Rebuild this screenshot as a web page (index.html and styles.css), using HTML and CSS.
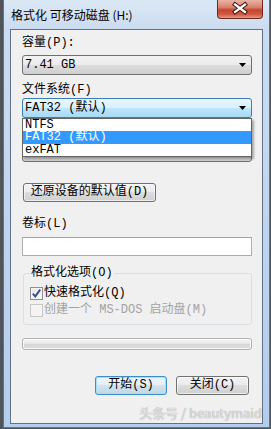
FILE: index.html
```html
<!DOCTYPE html>
<html>
<head>
    <title>格式化 可移动磁盘 (H:)</title>
    <link rel="stylesheet" href="styles.css">
</head>
<body>
    <div class="window">
        <div class="titlebar">
            <span class="title">格式化 可移动磁盘 (H:)</span>
            <div class="close-btn">
                <svg width="46" height="19" viewBox="0 0 46 19">
                    <path d="M18 5.5 L28 13 M28 5.5 L18 13" stroke="#3a1d18" stroke-width="4.2" stroke-linecap="square"/>
                    <path d="M18 5.5 L28 13 M28 5.5 L18 13" stroke="#ffffff" stroke-width="2.2" stroke-linecap="square"/>
                </svg>
            </div>
        </div>

        <div class="client">
            <div class="label">容量(P):</div>
            <div class="combo">
                <span>7.41 GB</span>
                <svg class="arrow" width="7" height="4" viewBox="0 0 7 4"><path d="M0 0H7L3.5 4Z" fill="#000"/></svg>
            </div>

            <div class="label mt9">文件系统(F)</div>
            <div class="combo-wrap">
                <div class="combo combo-hot">
                    <span>FAT32 (默认)</span>
                    <svg class="arrow" width="7" height="4" viewBox="0 0 7 4"><path d="M0 0H7L3.5 4Z" fill="#000"/></svg>
                </div>
                <ul class="droplist">
                    <li>NTFS</li>
                    <li class="selected">FAT32 (默认)</li>
                    <li>exFAT</li>
                </ul>
            </div>

            <!-- covered by the open drop-down list -->
            <div class="label mt9 covered">分配单元大小(A)</div>
            <div class="combo combo-alloc">
                <span class="covered">4096 字节</span>
                <svg class="arrow" width="7" height="4" viewBox="0 0 7 4"><path d="M0 0H7L3.5 4Z" fill="#000"/></svg>
            </div>

            <button class="btn btn-restore">还原设备的默认值(D)</button>

            <div class="label mt16">卷标(L)</div>
            <div class="textbox"></div>

            <fieldset class="group">
                <legend>格式化选项(O)</legend>
                <div class="check-row">
                    <span class="checkbox">
                        <svg width="11" height="11" viewBox="0 0 11 11"><path d="M1.8 5.6 L4.3 8.4 L9.2 1.6" fill="none" stroke="#3b4f8c" stroke-width="1.9"/></svg>
                    </span>
                    <span>快速格式化(Q)</span>
                </div>
                <div class="check-row disabled">
                    <span class="checkbox"></span>
                    <span>创建一个 MS-DOS 启动盘(M)</span>
                </div>
            </fieldset>

            <div class="progress"></div>

            <div class="actions">
                <button class="btn btn-default">开始(S)</button>
                <button class="btn btn-close">关闭(C)</button>
            </div>
        </div>

        <div class="watermark">头条号 / beautymaid</div>
    </div>
</body>
</html>
```

FILE: styles.css
```css
body {
    margin: 0;
    background: #50555b;
    font-family: "Liberation Mono", "Noto Sans CJK SC", monospace;
    font-size: 12px;
    color: #000;
}
.window {
    position: relative;
    box-sizing: border-box;
    margin-left: 3px;
    width: 267px;
    height: 428px;
    padding: 0 6px;
    border: 1px solid #5f7391;
    border-top: none;
    background: linear-gradient(to bottom, #dbe8f5 0, #cbdcf0 30px, #bdd4ee 60%, #b3cdec 100%);
}
.titlebar {
    display: flex;
    justify-content: space-between;
    height: 29px;
}
.title {
    padding: 6px 0 0 1px;
    font-family: "Noto Sans CJK SC", sans-serif;
    font-size: 12px;
    line-height: 17px;
}
.close-btn {
    box-sizing: border-box;
    width: 46px;
    height: 19px;
    border: 1px solid #6e2a20;
    border-top: none;
    border-radius: 0 0 4px 4px;
    background: linear-gradient(to bottom, #e9b3a6 0, #d98471 40%, #c7442f 55%, #cf5a43 80%, #e49a86 100%);
}
.close-btn svg {
    display: block;
    margin: -1px 0 0 -1px;
}
.client {
    box-sizing: border-box;
    height: 395px;
    padding: 7px 10px 0 11px;
    border: 1px solid #627189;
    background: #f0f0f0;
}
.label {
    height: 13px;
    line-height: 13px;
    white-space: nowrap;
}
.mt9 {
    margin-top: 9px;
}
.mt16 {
    margin-top: 16px;
}
.covered {
    visibility: hidden;
}
.combo {
    box-sizing: border-box;
    display: flex;
    align-items: center;
    justify-content: space-between;
    height: 20px;
    margin-top: 5px;
    padding: 0 5px 0 2px;
    border: 1px solid #707070;
    border-radius: 3px;
    background: linear-gradient(to bottom, #f2f2f2 0, #ebebeb 50%, #dddddd 50%, #cfcfcf 100%);
    line-height: 18px;
    white-space: nowrap;
}
.combo-wrap {
    position: relative;
    margin-top: 1px;
}
.combo-wrap .combo {
    margin-top: 0;
}
.combo-hot {
    border-color: #3c7fb1;
    background: linear-gradient(to bottom, #eaf6fd 0, #d9f0fc 50%, #bee6fd 50%, #a7d9f5 100%);
}
.combo-alloc {
    margin-top: 2px;
}
.droplist {
    position: absolute;
    top: 100%;
    left: 0;
    z-index: 2;
    box-sizing: border-box;
    width: 230px;
    margin: 0;
    padding: 0;
    list-style: none;
    border: 1px solid #646464;
    background: #fff;
    box-shadow: 2px 2px 2px rgba(0, 0, 0, 0.3);
}
.droplist li {
    height: 12px;
    padding-left: 2px;
    line-height: 12px;
    white-space: nowrap;
}
.droplist li.selected {
    height: 13px;
    line-height: 13px;
    background: #3399ff;
    color: #fff;
}
.btn {
    box-sizing: border-box;
    display: block;
    height: 19px;
    padding: 0;
    border: 1px solid #707070;
    border-radius: 3px;
    background: linear-gradient(to bottom, #f2f2f2 0, #ebebeb 50%, #dddddd 50%, #cfcfcf 100%);
    box-shadow: inset 0 0 0 1px rgba(255, 255, 255, 0.6);
    font-family: inherit;
    font-size: 12px;
    line-height: 17px;
    color: #000;
    white-space: nowrap;
}
.btn-restore {
    width: 133px;
    margin: 21px 0 0 1px;
}
.textbox {
    box-sizing: border-box;
    height: 19px;
    margin-top: 6px;
    border: 1px solid #abadb3;
    border-top-color: #a0a2a8;
    background: #fff;
}
.group {
    box-sizing: border-box;
    width: 229px;
    margin: 11px 0 0 1px;
    padding: 0 6px 7px;
    border: 1px solid #d5dfe5;
    border-radius: 3px;
}
.group legend {
    padding: 0 1px;
    height: 13px;
    line-height: 13px;
}
.check-row {
    display: flex;
    align-items: center;
    gap: 1px;
    height: 13px;
    margin-top: 7px;
    line-height: 13px;
    white-space: nowrap;
}
.check-row + .check-row {
    margin-top: 4px;
}
.checkbox {
    box-sizing: border-box;
    display: flex;
    align-items: center;
    justify-content: center;
    width: 13px;
    height: 13px;
    border: 1px solid #8e8f8f;
    background: linear-gradient(135deg, #e6e6e6 0, #fbfbfb 100%);
    box-shadow: inset 0 0 0 1px #f4f4f4;
}
.disabled {
    color: #a3a3a3;
}
.disabled .checkbox {
    border-color: #c7c7c7;
    background: #f4f4f4;
    box-shadow: none;
}
.progress {
    box-sizing: border-box;
    height: 12px;
    margin-top: 13px;
    border: 1px solid #b2b2b2;
    border-radius: 3px;
    background: linear-gradient(to bottom, #f6f6f6 0, #e6e6e6 50%, #d6d6d6 50%, #dedede 100%);
    box-shadow: inset 0 0 0 1px rgba(255, 255, 255, 0.7);
}
.actions {
    display: flex;
    justify-content: flex-end;
    gap: 9px;
    margin-top: 26px;
    padding-right: 3px;
}
.btn-default {
    width: 72px;
    border-color: #3c8fc4;
    background: linear-gradient(to bottom, #eef6fb 0, #e2eef6 50%, #d0e3ee 50%, #c2d8e5 100%);
    box-shadow: inset 0 0 0 1px #a6e0f7;
}
.btn-close {
    width: 73px;
}
.watermark {
    position: absolute;
    right: 7px;
    bottom: 7px;
    font-family: "Noto Sans CJK SC", sans-serif;
    font-size: 13px;
    line-height: 15px;
    color: rgba(235, 235, 235, 0.85);
    text-shadow: 0 0 1px rgba(0, 0, 0, 0.45);
    white-space: nowrap;
}
```
